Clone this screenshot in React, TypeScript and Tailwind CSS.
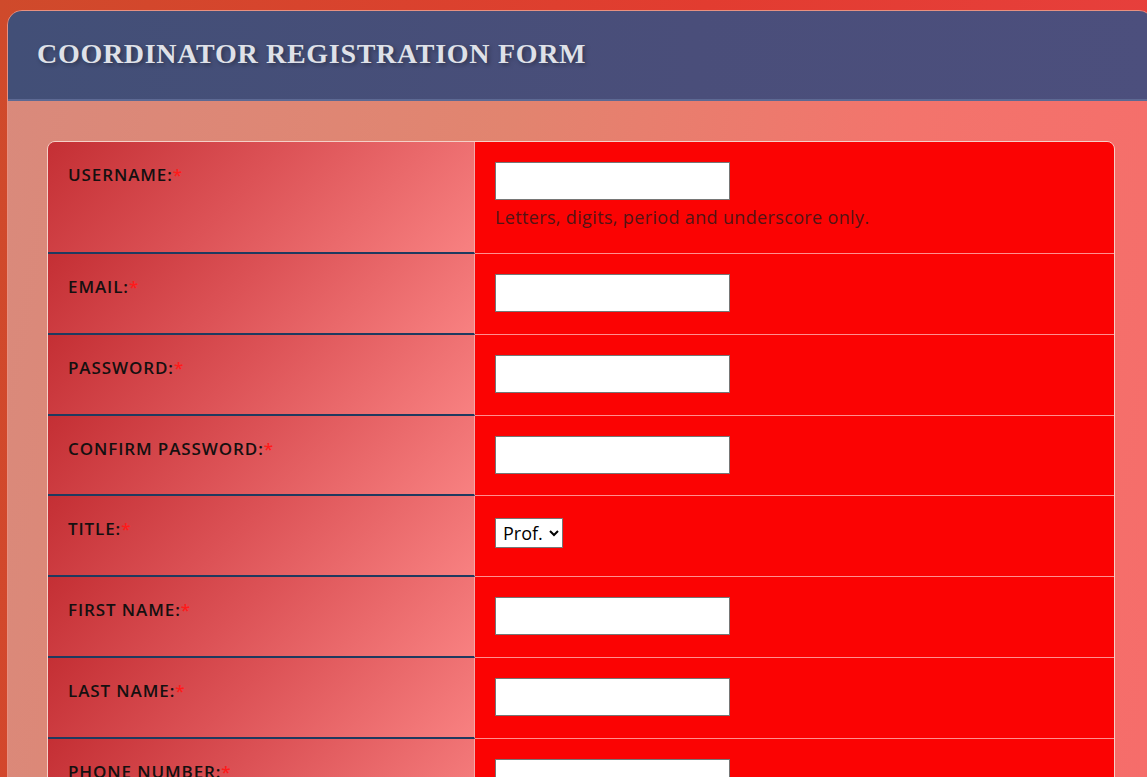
import React from "react";

type Row = { label: string; kind: "input" | "select"; helper?: string };

const rows: Row[] = [
  { label: "USERNAME:", kind: "input", helper: "Letters, digits, period and underscore only." },
  { label: "EMAIL:", kind: "input" },
  { label: "PASSWORD:", kind: "input" },
  { label: "CONFIRM PASSWORD:", kind: "input" },
  { label: "TITLE:", kind: "select" },
  { label: "FIRST NAME:", kind: "input" },
  { label: "LAST NAME:", kind: "input" },
  { label: "PHONE NUMBER:", kind: "input" },
  { label: "INSTITUTION:", kind: "input" },
];

export default function App() {
  return (
    <div className="w-[1147px] h-[777px] overflow-hidden bg-[linear-gradient(100deg,#cf4a2b,#e23c30_55%,#e8403f)] pt-[10px] pl-[7px]">
      <div className="w-[1147px] rounded-[15px] overflow-hidden border border-[#e89080] bg-[linear-gradient(100deg,#d98a7c,#e2846f_40%,#f3746c_70%,#f66c6a)]">
        <div className="h-[90px] flex items-center pl-[29px] bg-[linear-gradient(90deg,#424f77,#4a4e7a_60%,#4c4f7d)] border-b-2 border-[#5d6993]">
          <h1
            className="text-[28px] font-bold tracking-[0.7px] text-[#dfe1e8] mt-[-2px]"
            style={{ fontFamily: '"Liberation Serif", Georgia, serif', textShadow: "2px 2px 4px rgba(0,0,0,0.35)" }}
          >
            COORDINATOR REGISTRATION FORM
          </h1>
        </div>
        <div className="pt-[40px] pl-[39px] pb-[40px]">
          <div
            className="w-[1068px] rounded-[8px] overflow-hidden border border-[#f5d0c8]"
            style={{ fontFamily: '"Open Sans", "Noto Sans", sans-serif' }}
          >
            {rows.map((r, i) => (
              <div key={r.label} className={"flex " + (i === 0 ? "h-[112px]" : "h-[80.8px]")}>
                <div className="w-[427px] shrink-0 pl-[20px] pt-[21px] bg-[linear-gradient(135deg,#c42f34,#dc5256_45%,#f88181)] border-b-2 border-[#1f3a5f] border-r border-r-[#f2a8a8]">
                  <span className="text-[17px] font-semibold tracking-[0.9px] text-[#141010] leading-[24px]">
                    {r.label}
                    <span className="text-[#ff1a1a]">*</span>
                  </span>
                </div>
                <div className="flex-1 bg-[#fb0303] border-b border-[#ff8f8f] pl-[20px] pt-[20px]">
                  {r.kind === "input" ? (
                    <input
                      type="text"
                      className="block w-[235px] h-[38px] bg-white border border-[#767676] outline-none"
                    />
                  ) : (
                    <select
                      defaultValue="Prof."
                      className="mt-[2px] h-[30px] w-[68px] bg-white border border-[#767676] text-[18px] text-black pl-[3px]"
                      style={{ fontFamily: '"Open Sans", "Noto Sans", sans-serif' }}
                    >
                      <option>Mr.</option>
                      <option>Ms.</option>
                      <option>Dr.</option>
                      <option>Prof.</option>
                    </select>
                  )}
                  {r.helper && (
                    <div className="mt-[4px] text-[18px] tracking-[0.35px] leading-[26px] text-[#521515]">{r.helper}</div>
                  )}
                </div>
              </div>
            ))}
          </div>
        </div>
      </div>
    </div>
  );
}
